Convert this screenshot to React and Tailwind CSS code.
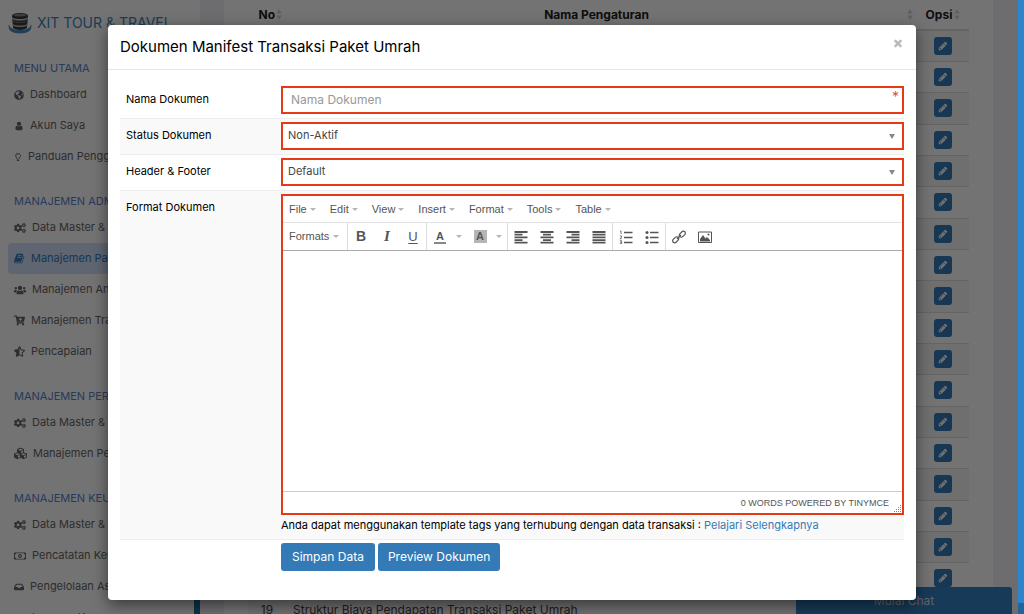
import React from "react";
import {
  FaCartPlus,
  FaCogs,
  FaCubes,
  FaGlobeAmericas,
  FaInbox,
  FaRegLightbulb,
  FaRegMoneyBillAlt,
  FaStarHalfAlt,
  FaUsers,
} from "react-icons/fa";

const FaIcon = ({ d, className }) => (
  <svg viewBox="0 0 1792 1792" className={className} fill="currentColor" aria-hidden="true">
    <path d={d} />
  </svg>
);

const BOOK =
  "M1639 478q40 57 18 129l-275 906q-19 64-76.5 107.5t-122.5 43.5h-923q-77 0-148.5-53.5t-99.5-131.5q-24-67-2-127 0-4 3-27t4-37q1-8-3-21.5t-3-19.5q2-11 8-21t16.5-23.5 16.5-23.5q23-38 45-91.5t30-91.5q3-10 .5-30t-.5-28q3-11 17-28t17-23q21-36 42-92t25-90q1-9-2.5-32t.5-28q4-13 22-30.5t22-22.5q19-26 42.5-84.5t27.5-96.5q1-8-3-25.5t-2-26.5q2-8 9-18t18-23 17-21q8-12 16.5-30.5t15-35 16-36 19.5-32 26.5-23.5 36-11.5 47.5 5.5l-1 3q38-9 51-9h761q74 0 114 56t18 130l-274 906q-36 119-71.5 153.5t-128.5 34.5h-869q-27 0-38 15-11 16-1 43 24 70 144 70h923q29 0 56-15.5t35-41.5l300-987q7-22 5-57 38 15 59 43zm-1064 2q-4 13 2 22.5t20 9.5h608q13 0 25.5-9.5t16.5-22.5l21-64q4-13-2-22.5t-20-9.5h-608q-13 0-25.5 9.5t-16.5 22.5zm-83 256q-4 13 2 22.5t20 9.5h608q13 0 25.5-9.5t16.5-22.5l21-64q4-13-2-22.5t-20-9.5h-608q-13 0-25.5 9.5t-16.5 22.5z";
const PENCIL =
  "M491 1536l91-91-235-235-91 91v107h128v128h107zm523-928q0-22-22-22-10 0-17 7l-542 542q-7 7-7 17 0 22 22 22 10 0 17-7l542-542q7-7 7-17zm-54-192l416 416-832 832h-416v-416zm683 96q0 53-37 90l-166 166-416-416 166-165q36-38 90-38 53 0 91 38l235 234q37 39 37 91z";
const USER =
  "M1536 1399q0 109-62.5 187t-150.5 78h-854q-88 0-150.5-78t-62.5-187q0-85 8.5-160.5t31.5-152 58.5-131 94-89 134.5-34.5q131 128 313 128t313-128q76 0 134.5 34.5t94 89 58.5 131 31.5 152 8.5 160.5zm-256-887q0 159-112.5 271.5t-271.5 112.5-271.5-112.5-112.5-271.5 112.5-271.5 271.5-112.5 271.5 112.5 112.5 271.5z";
const TIMES =
  "M1490 1322q0 40-28 68l-136 136q-28 28-68 28t-68-28l-294-294-294 294q-28 28-68 28t-68-28l-136-136q-28-28-28-68t28-68l294-294-294-294q-28-28-28-68t28-68l136-136q28-28 68-28t68 28l294 294 294-294q28-28 68-28t68 28l136 136q28 28 28 68t-28 68l-294 294 294 294q28 28 28 68z";

const menu = [
  {
    title: "MENU UTAMA",
    items: [
      { label: "Dashboard", icon: <FaGlobeAmericas className="size-[10px]" /> },
      { label: "Akun Saya", icon: <FaIcon d={USER} className="size-[10px]" /> },
      { label: "Panduan Pengguna", icon: <FaRegLightbulb className="size-[8px]" /> },
    ],
  },
  {
    title: "MANAJEMEN ADMIN",
    items: [
      { label: "Data Master &", icon: <FaCogs className="size-[12px]" /> },
      { label: "Manajemen Paket", icon: <FaIcon d={BOOK} className="size-[11px]" />, active: true },
      { label: "Manajemen Anggota", icon: <FaUsers className="size-[12px]" /> },
      { label: "Manajemen Transaksi", icon: <FaCartPlus className="size-[11px]" /> },
      { label: "Pencapaian", icon: <FaStarHalfAlt className="size-[11px]" /> },
    ],
  },
  {
    title: "MANAJEMEN PERSEDIAAN",
    items: [
      { label: "Data Master &", icon: <FaCogs className="size-[12px]" /> },
      { label: "Manajemen Persediaan", icon: <FaCubes className="size-[13px]" /> },
    ],
  },
  {
    title: "MANAJEMEN KEUANGAN",
    items: [
      { label: "Data Master &", icon: <FaCogs className="size-[12px]" /> },
      { label: "Pencatatan Keuangan", icon: <FaRegMoneyBillAlt className="size-[12px]" /> },
      { label: "Pengelolaan Aset", icon: <FaInbox className="size-[10px]" /> },
      { label: "Laporan Keuangan", icon: <FaRegMoneyBillAlt className="size-[12px]" /> },
    ],
  },
];

const settings = Array.from({ length: 19 }, (_, i) => ({
  no: i + 1,
  name: i === 18 ? "Struktur Biaya Pendapatan Transaksi Paket Umrah" : "",
}));

const Logo = () => (
  <svg viewBox="0 0 24 24" className="size-[24px] shrink-0" aria-hidden="true">
    <path d="M1 13c-2 6 3 9.500 11 9.500s13-3.500 11-9.500c-.5 4-4.500 6-11 6s-10.500-2-11-6z" fill="#4a8cc4" />
    <path d="M4 4.500c1-3.500 15-3.500 16 0l-1 12.500c-2.500 2.500-11.500 2.500-14 0z" fill="#3a3a3a" />
    <path d="M5 4.300c2-2.200 12-2.200 14 0-2 1.600-12 1.600-14 0z" fill="#8a8a8a" />
    <path d="M4 6.500c4 2 12 2 16 0l-.2 1.500c-4 2-11.600 2-15.600 0z" fill="#ccc" />
    <path d="M4.500 13c4 2 11 2 15 0l-.2 1.500c-4 2-10.600 2-14.600 0z" fill="#bbb" />
    <path d="M5.500 10.300c4 1.500 9 1.500 13 0" stroke="#999" strokeWidth="1" strokeDasharray="1.500 1" fill="none" />
  </svg>
);

const Sidebar = () => (
  <aside className="w-[200px] shrink-0 bg-white px-2">
    <div className="flex h-[45px] items-center gap-[5px] text-[14px] whitespace-nowrap text-[#3a86c0]">
      <Logo /> XIT TOUR &amp; TRAVEL
    </div>
    <nav className="flex flex-col gap-[18px] pt-3">
      {menu.map((group) => (
        <div key={group.title}>
          <h2 className="h-[22px] px-[6px] text-[11px] leading-[22px] whitespace-nowrap text-[#5b82cc]">
            {group.title}
          </h2>
          {group.items.map((item) => (
            <a
              key={item.label}
              href="#"
              className={`flex h-[31px] items-center gap-[6px] rounded px-[6px] text-[11px] whitespace-nowrap ${
                item.active ? "bg-[#d3e2fb] text-[#337ab7]" : "text-[#666]"
              }`}
            >
              {item.icon}
              {item.label}
            </a>
          ))}
        </div>
      ))}
    </nav>
  </aside>
);

const SortIcon = () => (
  <svg viewBox="0 0 6 12" className="inline h-[11px] w-[6px] text-[#d2d2d2]" fill="currentColor" aria-hidden="true">
    <path d="M3 0l3 5H0zM3 12l3-5H0z" />
  </svg>
);

const SettingsTable = () => (
  <main className="min-w-0 flex-1 bg-[#f1f1f8] pl-6 pr-[25px]">
    <div className="bg-white px-6">
      <table className="w-full table-fixed border-collapse text-[12px] text-[#444]">
        <thead>
          <tr className="h-[30px] border-b-2 border-[#ddd] text-[12px] text-[#222]">
            <th className="w-[38px]">
              <span className="flex items-center justify-end gap-[1px] pr-[4px]">No <SortIcon /></span>
            </th>
            <th>
              <span className="flex items-center justify-end pr-[4px]">
                <span className="flex-1 text-center">Nama Pengaturan</span>
                <SortIcon />
              </span>
            </th>
            <th className="w-[52px]">
              <span className="flex items-center justify-center gap-[2px]">Opsi <SortIcon /></span>
            </th>
          </tr>
        </thead>
        <tbody>
          {settings.map((row) => (
            <tr key={row.no} className="h-[31px] border-b border-[#ddd] odd:bg-[#f6f6f6] nth-[3n]:h-[32px]">
              <td className="text-center">{row.no}</td>
              <td className="px-[7px]">{row.name}</td>
              <td className="text-center">
                <button
                  type="button"
                  aria-label={`Edit ${row.no}`}
                  className="inline-flex size-[18px] items-center justify-center rounded-[3px] bg-[#337ab7] align-middle text-white"
                >
                  <FaIcon d={PENCIL} className="size-[10px]" />
                </button>
              </td>
            </tr>
          ))}
        </tbody>
      </table>
    </div>
  </main>
);

const Caret = () => (
  <svg viewBox="0 0 6 3" className="h-[3px] w-[6px]" fill="#b5b5b5" aria-hidden="true">
    <path d="M0 0h6L3 3z" />
  </svg>
);

const LineIcon = ({ d, width = 1.5, children }) => (
  <svg viewBox="0 0 14 14" className="size-[14px]" stroke="#555" strokeWidth={width} fill="none" aria-hidden="true">
    <path d={d} />
    {children}
  </svg>
);

const Tool = ({ label, children }) => (
  <button type="button" aria-label={label} className="flex h-full w-[26px] items-center justify-center">
    {children}
  </button>
);

const ToolGroup = ({ children }) => (
  <div className="flex h-full items-center border-l border-[#ddd]">{children}</div>
);

const ColorCaret = ({ label }) => (
  <button type="button" aria-label={label} className="flex h-full w-[14px] items-center pl-[3px]">
    <Caret />
  </button>
);

const editorMenus = ["File", "Edit", "View", "Insert", "Format", "Tools", "Table"];

const Editor = () => (
  <div className="border-2 border-[#e63a14] bg-white font-['Liberation_Sans',sans-serif] text-[11px] text-[#555]">
    <div className="flex h-[27px] items-center gap-[14px] border-b border-[#e2e2e2] px-[6px]">
      {editorMenus.map((name) => (
        <button key={name} type="button" className="flex items-center gap-[3px]">
          {name} <Caret />
        </button>
      ))}
    </div>
    <div className="flex h-[28px] items-center border-b border-[#aaa]">
      <button type="button" className="flex w-[64px] items-center gap-[4px] pl-[6px]">
        Formats <Caret />
      </button>
      <ToolGroup>
        <Tool label="Bold"><b className="text-[14px]">B</b></Tool>
        <Tool label="Italic">
          <i className="font-['Liberation_Serif',serif] text-[15px] font-bold">I</i>
        </Tool>
        <Tool label="Underline"><u className="text-[13px] underline-offset-2">U</u></Tool>
      </ToolGroup>
      <ToolGroup>
        <Tool label="Text color">
          <span className="w-3 border-b-2 border-[#888] pt-[2px] text-center text-[11px] leading-[11px] font-bold">A</span>
        </Tool>
        <ColorCaret label="Text colors" />
        <Tool label="Background color">
          <span className="size-[13px] bg-[#b5b5b5] text-center text-[11px] leading-[13px] font-bold">A</span>
        </Tool>
        <ColorCaret label="Background colors" />
      </ToolGroup>
      <ToolGroup>
        <Tool label="Align left"><LineIcon width={1.8} d="M.5 2h13M.5 4.700h8M.5 7.400h13M.5 10.100h8M.5 12.700h13" /></Tool>
        <Tool label="Align center"><LineIcon width={1.8} d="M.5 2h13M3 4.700h8M.5 7.400h13M3 10.100h8M.5 12.700h13" /></Tool>
        <Tool label="Align right"><LineIcon width={1.8} d="M.5 2h13M5.500 4.700h8M.5 7.400h13M5.500 10.100h8M.5 12.700h13" /></Tool>
        <Tool label="Justify"><LineIcon width={1.8} d="M.5 2h13M.5 4.700h13M.5 7.400h13M.5 10.100h13M.5 12.700h13" /></Tool>
      </ToolGroup>
      <ToolGroup>
        <Tool label="Numbered list">
          <LineIcon d="M5 2.500h8.500M5 7.500h8.500M5 12.500h8.500">
            <path d="M1 1h1v3M.8 6h1.700v1.200L1 8.800h1.700M.8 10.700h1.800v3H.8M1 12.200h1.500" strokeWidth=".8" />
          </LineIcon>
        </Tool>
        <Tool label="Bullet list">
          <LineIcon d="M5 2.500h8.500M5 7.500h8.500M5 12.500h8.500">
            <g fill="#555" stroke="none">
              <circle cx="2" cy="2.500" r="1.500" />
              <circle cx="2" cy="7.500" r="1.500" />
              <circle cx="2" cy="12.500" r="1.500" />
            </g>
          </LineIcon>
        </Tool>
      </ToolGroup>
      <ToolGroup>
        <Tool label="Insert link">
          <svg viewBox="0 0 14 14" className="size-[14px]" stroke="#555" strokeWidth="1.200" fill="none" aria-hidden="true">
            <rect x="6.800" y="2.200" width="7" height="4" rx="2" transform="rotate(-45 10.300 4.200)" />
            <rect x=".2" y="7.800" width="7" height="4" rx="2" transform="rotate(-45 3.700 9.800)" />
            <path d="M5 9l4-4" />
          </svg>
        </Tool>
        <Tool label="Insert image">
          <svg viewBox="0 0 14 14" className="size-[14px]" fill="#555" aria-hidden="true">
            <path d="M.5 2h13v10.500H.5z" fill="none" stroke="#555" />
            <path d="M2 11.500V9l3-4 2.500 3.500L9 7l3 3v1.500z" />
            <circle cx="10.500" cy="4.500" r="1" />
          </svg>
        </Tool>
      </ToolGroup>
    </div>
    <textarea id="format" aria-label="Format Dokumen" className="block h-[240px] w-full resize-none p-2 outline-none" />
    <div className="flex h-[22px] items-center justify-end border-t border-[#ccc] text-[9px]">
      <span className="pt-[2px] pr-[4px]">0 WORDS POWERED BY TINYMCE</span>
      <svg viewBox="0 0 9 9" className="size-[9px] self-end" fill="#888" aria-hidden="true">
        <path d="M7 1h1v1H7zM5 3h1v1H5zM7 3h1v1H7zM3 5h1v1H3zM5 5h1v1H5zM7 5h1v1H7zM1 7h1v1H1zM3 7h1v1H3zM5 7h1v1H5zM7 7h1v1H7z" />
      </svg>
    </div>
  </div>
);

const SelectField = ({ id, options }) => (
  <div className="relative">
    <select
      id={id}
      className="block h-[28px] w-full appearance-none border-2 border-[#e63a14] bg-white px-[5px] pb-[2px] text-[11px] text-[#444] outline-none"
    >
      {options.map((option) => (
        <option key={option}>{option}</option>
      ))}
    </select>
    <svg viewBox="0 0 6 5" className="pointer-events-none absolute top-3 right-[9px] h-[5px] w-[6px]" fill="#888" aria-hidden="true">
      <path d="M0 0h6L3 5z" />
    </svg>
  </div>
);

const FormRow = ({ label, htmlFor, shaded, children }) => (
  <div
    className={`flex border-t pl-[6px] pt-[3px] pb-1 first:border-transparent ${
      shaded ? "border-[#eee] bg-[#f9f9f9]" : "border-[#eee]"
    }`}
  >
    <label htmlFor={htmlFor} className="w-[155px] shrink-0 text-[11px] leading-[27px] text-black">
      {label}
    </label>
    <div className="min-w-0 flex-1">{children}</div>
  </div>
);

const DocumentModal = () => (
  <div
    role="dialog"
    aria-label="Dokumen Manifest Transaksi Paket Umrah"
    className="mx-[108px] mt-[25px] rounded-[4px] bg-white shadow-[0_5px_15px_rgba(0,0,0,0.5)]"
  >
    <div className="flex h-[45px] items-center justify-between border-b border-[#e5e5e5] px-3">
      <h1 className="text-[15px] text-black">Dokumen Manifest Transaksi Paket Umrah</h1>
      <button type="button" aria-label="Tutup" className="pb-2 text-[#bbb]">
        <FaIcon d={TIMES} className="size-[12px]" />
      </button>
    </div>
    <form className="px-3 pt-3 pb-[29px]">
      <FormRow label="Nama Dokumen" htmlFor="nama">
        <div className="relative">
          <input
            id="nama"
            type="text"
            placeholder="Nama Dokumen"
            className="block h-[28px] w-full border-2 border-[#e63a14] px-2 pb-[2px] text-[12px] outline-none placeholder:text-[#999]"
          />
          <span className="absolute top-[3px] right-[5px] text-[14px] leading-[16px] text-[#d9534f]">*</span>
        </div>
      </FormRow>
      <FormRow label="Status Dokumen" htmlFor="status" shaded>
        <SelectField id="status" options={["Non-Aktif", "Aktif"]} />
      </FormRow>
      <FormRow label="Header & Footer" htmlFor="header">
        <SelectField id="header" options={["Default"]} />
      </FormRow>
      <FormRow label="Format Dokumen" htmlFor="format" shaded>
        <Editor />
        <p className="text-[11px] leading-[20px] text-black">
          Anda dapat menggunakan template tags yang terhubung dengan data transaksi :{" "}
          <a href="#" className="text-[#337ab7]">Pelajari Selengkapnya</a>
        </p>
      </FormRow>
      <div className="flex gap-[3px] border-t border-[#eee] pt-[3px] pl-[161px]">
        <button type="button" className="h-[28px] rounded-[3px] bg-[#337ab7] px-[11px] text-[12px] text-white">
          Simpan Data
        </button>
        <button type="button" className="h-[28px] rounded-[3px] bg-[#337ab7] px-[10px] text-[12px] text-white">
          Preview Dokumen
        </button>
      </div>
    </form>
  </div>
);

const App = () => (
  <div className="relative h-screen overflow-hidden bg-white font-[Inter,sans-serif]">
    <div className="flex h-full pr-[6px]">
      <Sidebar />
      <SettingsTable />
    </div>
    <div className="absolute bottom-0 left-[194px] h-8 w-[6px] bg-[#1d6fa5]" />
    <button
      type="button"
      className="absolute right-[12px] bottom-0 h-[27px] w-[216px] rounded-t-[3px] bg-[#3480c4] text-[12px] text-[#ddd]"
    >
      Mulai Chat
    </button>
    <div className="absolute inset-0 bg-black/55">
      <DocumentModal />
    </div>
    <div className="absolute inset-y-0 right-0 flex w-[6px] flex-col bg-[#2b84cc]">
      <div className="mt-auto h-[11px] bg-[#1f659c]" />
    </div>
  </div>
);

export default App;
